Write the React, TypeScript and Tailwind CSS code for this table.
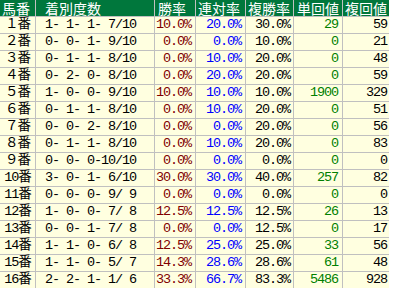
type Row = [string, string, string, string, string, string, string]

const rows: Row[] = [
  ['１番', '1- 1- 1- 7/10', '10.0%', '20.0%', '30.0%', '29', '59'],
  ['２番', '0- 0- 1- 9/10', '0.0%', '0.0%', '10.0%', '0', '21'],
  ['３番', '0- 1- 1- 8/10', '0.0%', '10.0%', '20.0%', '0', '48'],
  ['４番', '0- 2- 0- 8/10', '0.0%', '20.0%', '20.0%', '0', '59'],
  ['５番', '1- 0- 0- 9/10', '10.0%', '10.0%', '10.0%', '1900', '329'],
  ['６番', '0- 1- 1- 8/10', '0.0%', '10.0%', '20.0%', '0', '51'],
  ['７番', '0- 0- 2- 8/10', '0.0%', '0.0%', '20.0%', '0', '56'],
  ['８番', '0- 1- 1- 8/10', '0.0%', '10.0%', '20.0%', '0', '83'],
  ['９番', '0- 0- 0-10/10', '0.0%', '0.0%', '0.0%', '0', '0'],
  ['10番', '3- 0- 1- 6/10', '30.0%', '30.0%', '40.0%', '257', '82'],
  ['11番', '0- 0- 0- 9/ 9', '0.0%', '0.0%', '0.0%', '0', '0'],
  ['12番', '1- 0- 0- 7/ 8', '12.5%', '12.5%', '12.5%', '26', '13'],
  ['13番', '0- 0- 1- 7/ 8', '0.0%', '0.0%', '12.5%', '0', '17'],
  ['14番', '1- 1- 0- 6/ 8', '12.5%', '25.0%', '25.0%', '33', '56'],
  ['15番', '1- 1- 0- 5/ 7', '14.3%', '28.6%', '28.6%', '61', '48'],
  ['16番', '2- 2- 1- 1/ 6', '33.3%', '66.7%', '83.3%', '5486', '928'],
]

const cell = 'h-4 bg-[#ffffe0] flex items-center whitespace-pre leading-4'
const head =
  "h-4 bg-[#00773c] text-white text-[14px] tracking-normal flex items-center whitespace-nowrap leading-4 font-['Noto_Sans_CJK_JP',sans-serif]"

export default function App() {
  return (
    <div
      className="w-[389px] grid grid-cols-[35px_118px_40px_49px_47px_48px_46px] gap-px bg-[#c0c0c0] text-[13.5px] tracking-[-1.1px] text-black"
      style={{ fontFamily: '"Liberation Mono", "Noto Sans CJK JP", monospace' }}
    >
      {/* header */}
      <div className={`${head} pl-[2px]`}>馬番</div>
      <div className={`${head} pl-[9px]`}>着別度数</div>
      <div className={`${head} pl-[3px]`}>勝率</div>
      <div className={`${head} pl-[2px]`}>連対率</div>
      <div className={`${head} pl-[2px]`}>複勝率</div>
      <div className={`${head} pl-[3px]`}>単回値</div>
      <div className={`${head} pl-[2px]`}>複回値</div>

      {rows.map((r) => (
        <div key={r[0]} className="contents">
          <div className={`${cell} justify-center`}>{r[0]}</div>
          <div className={`${cell} pl-[9px]`}>{r[1]}</div>
          <div className={`${cell} justify-end pr-[4px] text-[#800000]`}>{r[2]}</div>
          <div className={`${cell} justify-end pr-[4px] text-[#0000ff]`}>{r[3]}</div>
          <div className={`${cell} justify-end pr-[3px]`}>{r[4]}</div>
          <div className={`${cell} justify-end pr-[4px] text-[#008000]`}>{r[5]}</div>
          <div className={`${cell} justify-end pr-[2px]`}>{r[6]}</div>
        </div>
      ))}
    </div>
  )
}
